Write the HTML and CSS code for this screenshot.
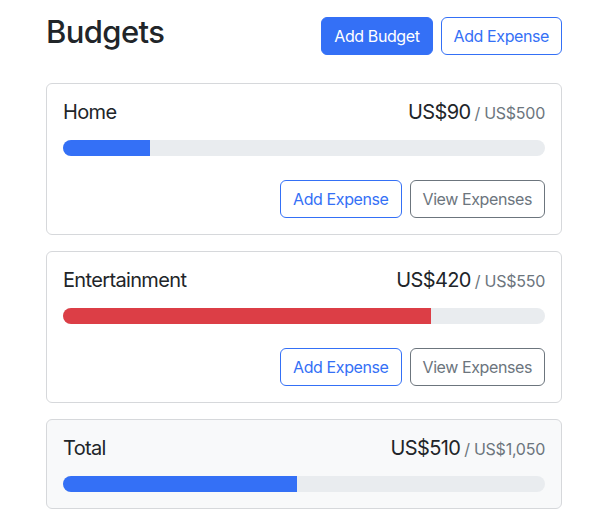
FILE: index.html
```html
<!DOCTYPE html>
<html lang="en">
<head>
<meta charset="utf-8">
<title>Budgets</title>
<link rel="stylesheet" href="styles.css">
</head>
<body>
<div class="container">
  <div class="header">
    <h1 class="title">Budgets</h1>
    <button class="btn btn-primary">Add Budget</button>
    <button class="btn btn-outline-primary">Add Expense</button>
  </div>
  <div class="cards">
    <div class="card">
      <div class="card-title">
        <div>Home</div>
        <div class="amount">US$90<span class="max">/ US$500</span></div>
      </div>
      <div class="progress"><div class="bar bar-primary" style="width: 18%"></div></div>
      <div class="actions">
        <button class="btn btn-outline-primary">Add Expense</button>
        <button class="btn btn-outline-secondary">View Expenses</button>
      </div>
    </div>
    <div class="card">
      <div class="card-title">
        <div>Entertainment</div>
        <div class="amount">US$420<span class="max">/ US$550</span></div>
      </div>
      <div class="progress"><div class="bar bar-danger" style="width: 76.36%"></div></div>
      <div class="actions">
        <button class="btn btn-outline-primary">Add Expense</button>
        <button class="btn btn-outline-secondary">View Expenses</button>
      </div>
    </div>
    <div class="card card-light">
      <div class="card-title">
        <div>Total</div>
        <div class="amount">US$510<span class="max">/ US$1,050</span></div>
      </div>
      <div class="progress"><div class="bar bar-primary" style="width: 48.57%"></div></div>
    </div>
  </div>
</div>
</body>
</html>
```

FILE: styles.css
```css
* { box-sizing: border-box; }
html, body { margin: 0; padding: 0; background: #fff; }
body {
  font-family: Inter, "Noto Sans", "Liberation Sans", sans-serif;
  font-size: 16px;
  line-height: 1.5;
  color: #212529;
}
.container {
  max-width: 540px;
  margin: 0 auto;
  padding: 13px 13px 0 11px;
}
.header {
  display: flex;
  align-items: center;
  gap: 8px;
  margin-bottom: 25px;
}
.title {
  margin: 0 auto 8px 0;
  font-size: 31px;
  font-weight: 500;
  line-height: 1.2;
  letter-spacing: -0.6px;
}
.btn {
  font-family: inherit;
  font-size: 16px;
  line-height: 24px;
  padding: 6px 12px;
  border: 1px solid transparent;
  border-radius: 6px;
  background: transparent;
  letter-spacing: -0.4px;
  cursor: pointer;
}
.btn-primary { background: #3470f6; border-color: #3470f6; color: #fff; }
.btn-outline-primary { border-color: #3470f6; color: #3470f6; }
.btn-outline-secondary { border-color: #6c757d; color: #6c757d; }
.cards { display: flex; flex-direction: column; gap: 16px; }
.card {
  border: 1px solid #d6d8db;
  border-radius: 6px;
  padding: 16px;
  background: #fff;
}
.card-light { background: #f8f9fa; }
.card-title {
  display: flex;
  justify-content: space-between;
  align-items: baseline;
  font-size: 20px;
  line-height: 1.2;
  letter-spacing: -0.65px;
  margin-bottom: 16px;
}
.amount { display: flex; align-items: baseline; }
.max { font-size: 16px; color: #6c757d; margin-left: 4px; letter-spacing: -0.25px; }
.progress {
  height: 16px;
  background: #e9ecef;
  border-radius: 50rem;
  overflow: hidden;
  display: flex;
}
.bar { height: 100%; }
.bar-primary { background: #3470f6; }
.bar-danger { background: #dc3e46; }
.actions {
  display: flex;
  justify-content: flex-end;
  gap: 8px;
  margin-top: 24px;
}
```
